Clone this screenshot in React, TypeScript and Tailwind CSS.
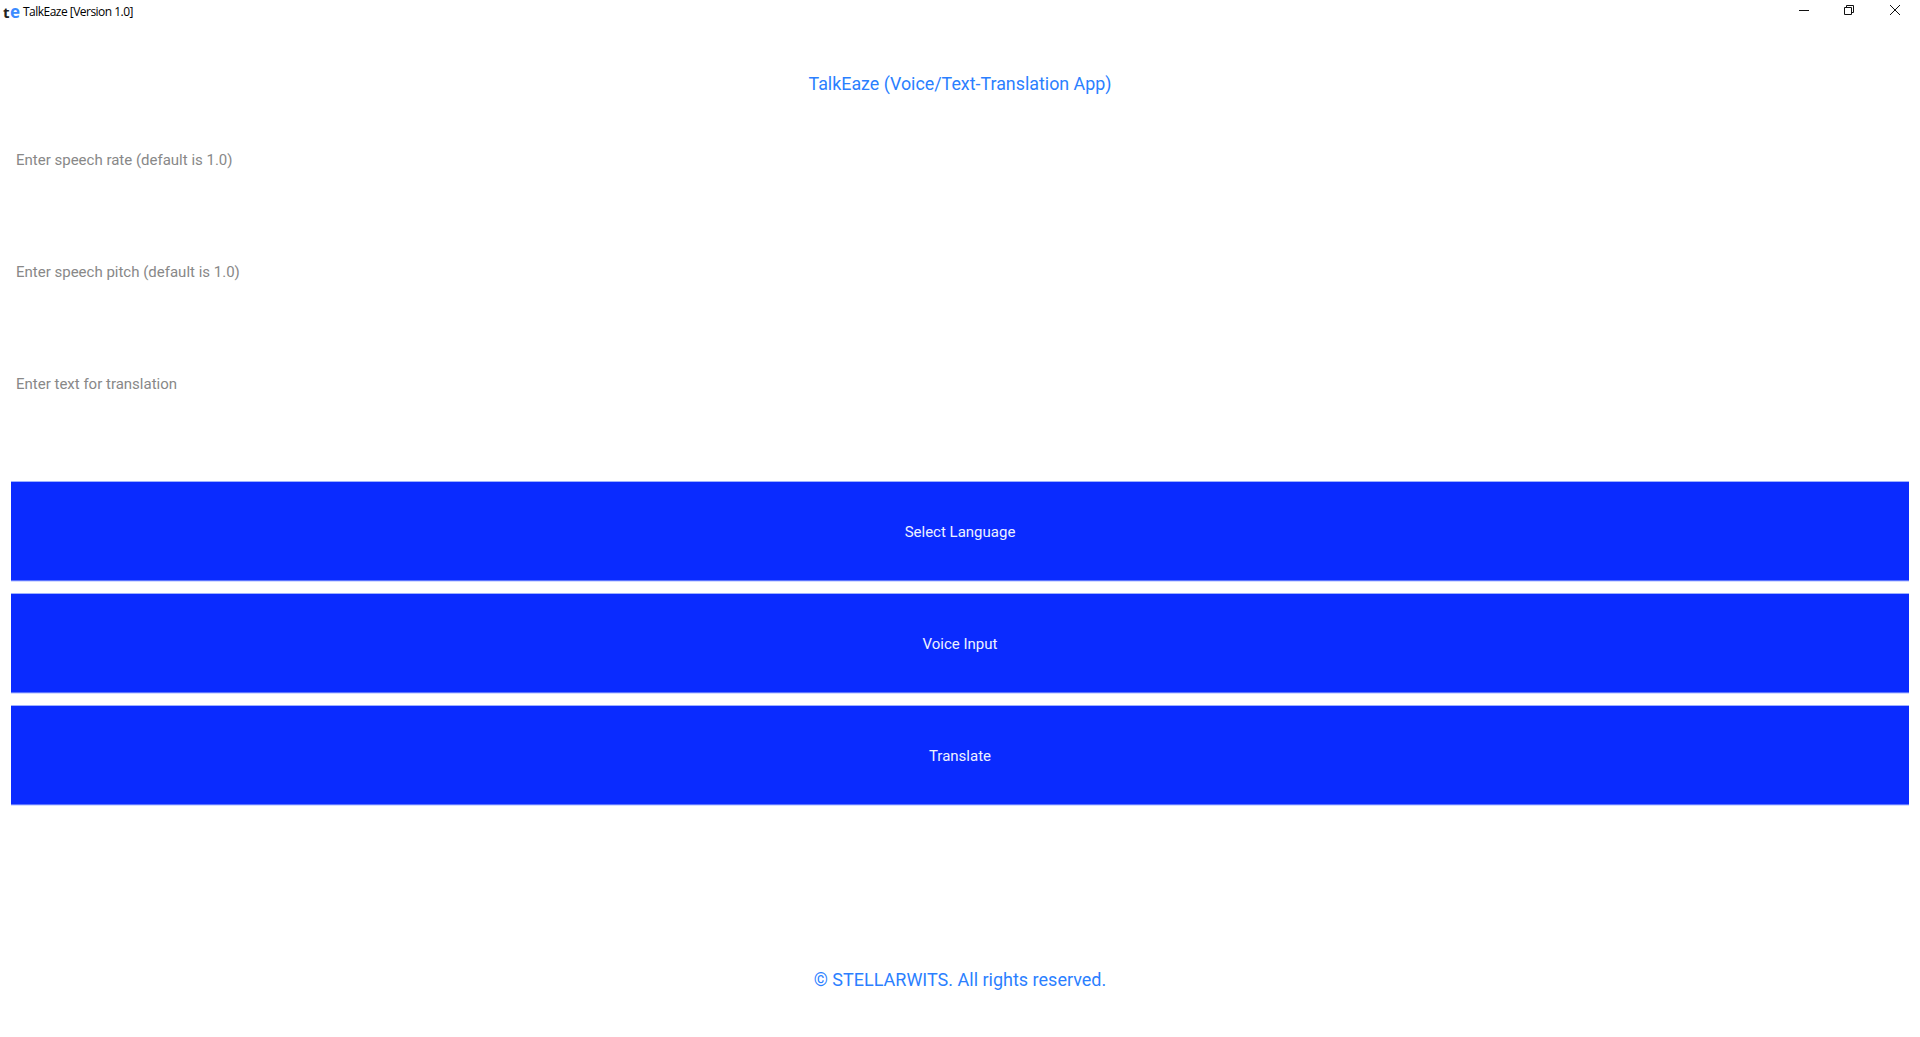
export default function App() {
  const roboto = "font-['Roboto',sans-serif]";
  const inputs = ["Enter speech rate (default is 1.0)", "Enter speech pitch (default is 1.0)", "Enter text for translation"];
  const buttons = ["Select Language", "Voice Input", "Translate"];
  return (
    <div className={`h-[1037px] w-[1920px] overflow-hidden bg-white flex flex-col ${roboto}`}>
      <div className="h-[24px] flex items-center justify-between shrink-0">
        <div className="flex items-center pl-[3px] pb-[1px]">
          <span className="flex items-baseline w-[20px] leading-none font-bold font-['Open_Sans',sans-serif]">
            <span className="text-[15px] w-[7px] text-[#222]">t</span>
            <span className="text-[17px] text-[#3b8bff]">e</span>
          </span>
          <span className="text-[12px] text-black font-['Open_Sans',sans-serif] tracking-[-0.52px]">TalkEaze [Version 1.0]</span>
        </div>
        <div className="flex items-center pr-[19px] pb-[4px]">
          <svg width="12" height="12" viewBox="0 0 12 12" className="mr-[33px]"><path d="M1 6.5h10" stroke="#111" strokeWidth="1" fill="none" /></svg>
          <svg width="12" height="12" viewBox="0 0 12 12" className="mr-[34px]"><path d="M1.5 3.5h7v7h-7zM3.5 3.5v-2h7v7h-2" stroke="#111" strokeWidth="1" fill="none" /></svg>
          <svg width="12" height="12" viewBox="0 0 12 12"><path d="M1 1l10 10M11 1L1 11" stroke="#111" strokeWidth="1" fill="none" /></svg>
        </div>
      </div>
      <div className="h-[121px] shrink-0 pt-[47px] text-center text-[17.85px] leading-[26px] text-[#2b7fff]">TalkEaze (Voice/Text-Translation App)</div>
      <div className="flex flex-col gap-[12px] pl-[11px] pr-[11px]">
        {inputs.map((t) => (
          <div key={t} className="h-[100px] pl-[5px] pt-[5px] text-[15px] leading-[20px] text-[#888888]">{t}</div>
        ))}
        {buttons.map((t) => (
          <button key={t} className="h-[100px] pt-[2px] flex items-center justify-center bg-[#0a2bff] border-t border-t-[#9db0ff] border-b border-b-[#5c74ff] shadow-[0_1px_0_#d5dcff] text-[15px] text-[#eef1ff]">{t}</button>
        ))}
      </div>
      <div className="mt-[161px] text-center text-[18px] leading-[28px] text-[#2b7fff]">© STELLARWITS. All rights reserved.</div>
    </div>
  );
}
